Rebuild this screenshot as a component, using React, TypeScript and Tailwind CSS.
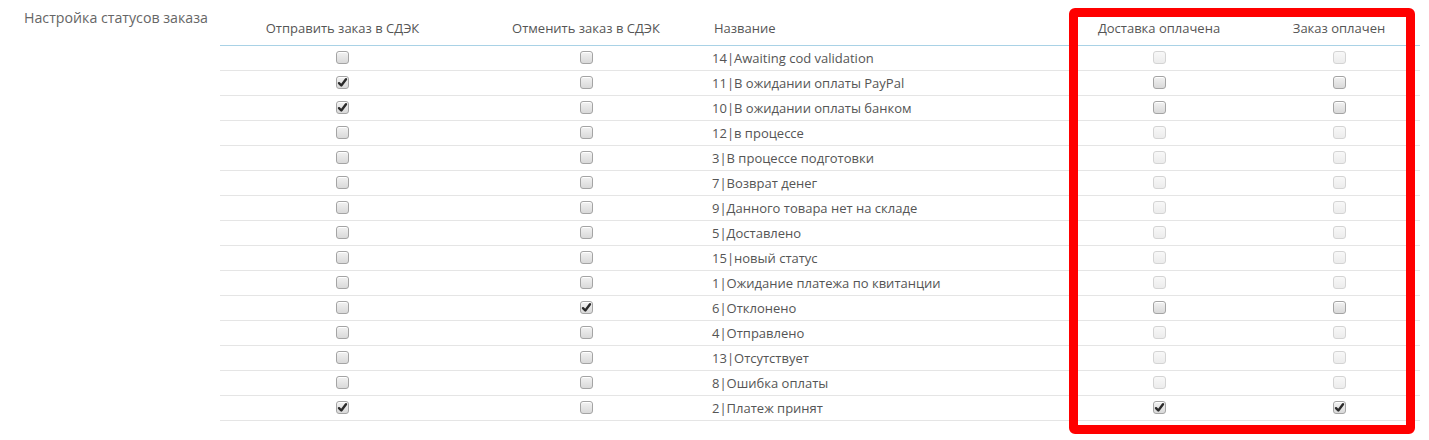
import React from "react";

type Row = { id: number; name: string; send: boolean; cancel: boolean; enabled: boolean; paid: boolean };

const rows: Row[] = [
  { id: 14, name: "Awaiting cod validation", send: false, cancel: false, enabled: false, paid: false },
  { id: 11, name: "В ожидании оплаты PayPal", send: true, cancel: false, enabled: true, paid: false },
  { id: 10, name: "В ожидании оплаты банком", send: true, cancel: false, enabled: true, paid: false },
  { id: 12, name: "в процессе", send: false, cancel: false, enabled: false, paid: false },
  { id: 3, name: "В процессе подготовки", send: false, cancel: false, enabled: false, paid: false },
  { id: 7, name: "Возврат денег", send: false, cancel: false, enabled: false, paid: false },
  { id: 9, name: "Данного товара нет на складе", send: false, cancel: false, enabled: false, paid: false },
  { id: 5, name: "Доставлено", send: false, cancel: false, enabled: false, paid: false },
  { id: 15, name: "новый статус", send: false, cancel: false, enabled: false, paid: false },
  { id: 1, name: "Ожидание платежа по квитанции", send: false, cancel: false, enabled: false, paid: false },
  { id: 6, name: "Отклонено", send: false, cancel: true, enabled: true, paid: false },
  { id: 4, name: "Отправлено", send: false, cancel: false, enabled: false, paid: false },
  { id: 13, name: "Отсутствует", send: false, cancel: false, enabled: false, paid: false },
  { id: 8, name: "Ошибка оплаты", send: false, cancel: false, enabled: false, paid: false },
  { id: 2, name: "Платеж принят", send: true, cancel: false, enabled: true, paid: true },
];

function Box({ checked, disabled }: { checked?: boolean; disabled?: boolean }) {
  return (
    <div
      className={
        disabled
          ? "relative w-[13px] h-[13px] rounded-[3px] border border-[#d4d4d4] bg-gradient-to-b from-[#f8f8f8] to-[#ececec]"
          : "relative w-[13px] h-[13px] rounded-[3px] border border-[#a4a4a4] bg-gradient-to-b from-[#f2f2f2] to-[#d9d9d9] shadow-[inset_0_1px_0_#fff]"
      }
    >
      {checked && (
        <svg className="absolute left-[0px] top-[0px]" width="11" height="11" viewBox="0 0 11 11">
          <path d="M2 6.2 L4.3 8.5 L9 2.3" fill="none" stroke="#2a2a2a" strokeWidth="2.4" strokeLinecap="round" strokeLinejoin="round" />
        </svg>
      )}
    </div>
  );
}

const grid = "grid grid-cols-[245px_242px_353px_198px_162px]";

export default function App() {
  return (
    <div
      className="w-[1429px] h-[440px] bg-white flex text-[#555] text-[13px]"
      style={{ fontFamily: '"Open Sans", "Noto Sans", sans-serif' }}
    >
      <div className="w-[220px] pl-[24px] pt-[9px] leading-[18px] text-[14.2px] text-[#666] whitespace-nowrap">Настройка статусов заказа</div>
      <div className="relative mt-[11px] w-[1200px]">
        <div className={`${grid} border-b border-[#a9d2e6] pb-[8px] pt-[8px] leading-[18px]`}>
          <div className="text-center">Отправить заказ в СДЭК</div>
          <div className="text-center">Отменить заказ в СДЭК</div>
          <div className="pl-[7px]">Название</div>
          <div className="text-center">Доставка оплачена</div>
          <div className="text-center">Заказ оплачен</div>
        </div>
        {rows.map((r) => (
          <div key={r.id} className={`${grid} h-[25px] border-b border-[#e5e5e5] items-center`}>
            <div className="flex justify-center -mt-[2px]">
              <Box checked={r.send} />
            </div>
            <div className="flex justify-center -mt-[2px]">
              <Box checked={r.cancel} />
            </div>
            <div className="pl-[5px] leading-[18px] whitespace-nowrap">
              {r.id}|{r.name}
            </div>
            <div className="flex justify-center -mt-[2px]">
              <Box checked={r.paid} disabled={!r.enabled} />
            </div>
            <div className="flex justify-center -mt-[2px]">
              <Box checked={r.paid} disabled={!r.enabled} />
            </div>
          </div>
        ))}
        <div className="absolute left-[849px] top-[-3px] w-[346px] h-[426px] border-[9px] border-[#ff0000] rounded-[6px] pointer-events-none" />
      </div>
    </div>
  );
}
